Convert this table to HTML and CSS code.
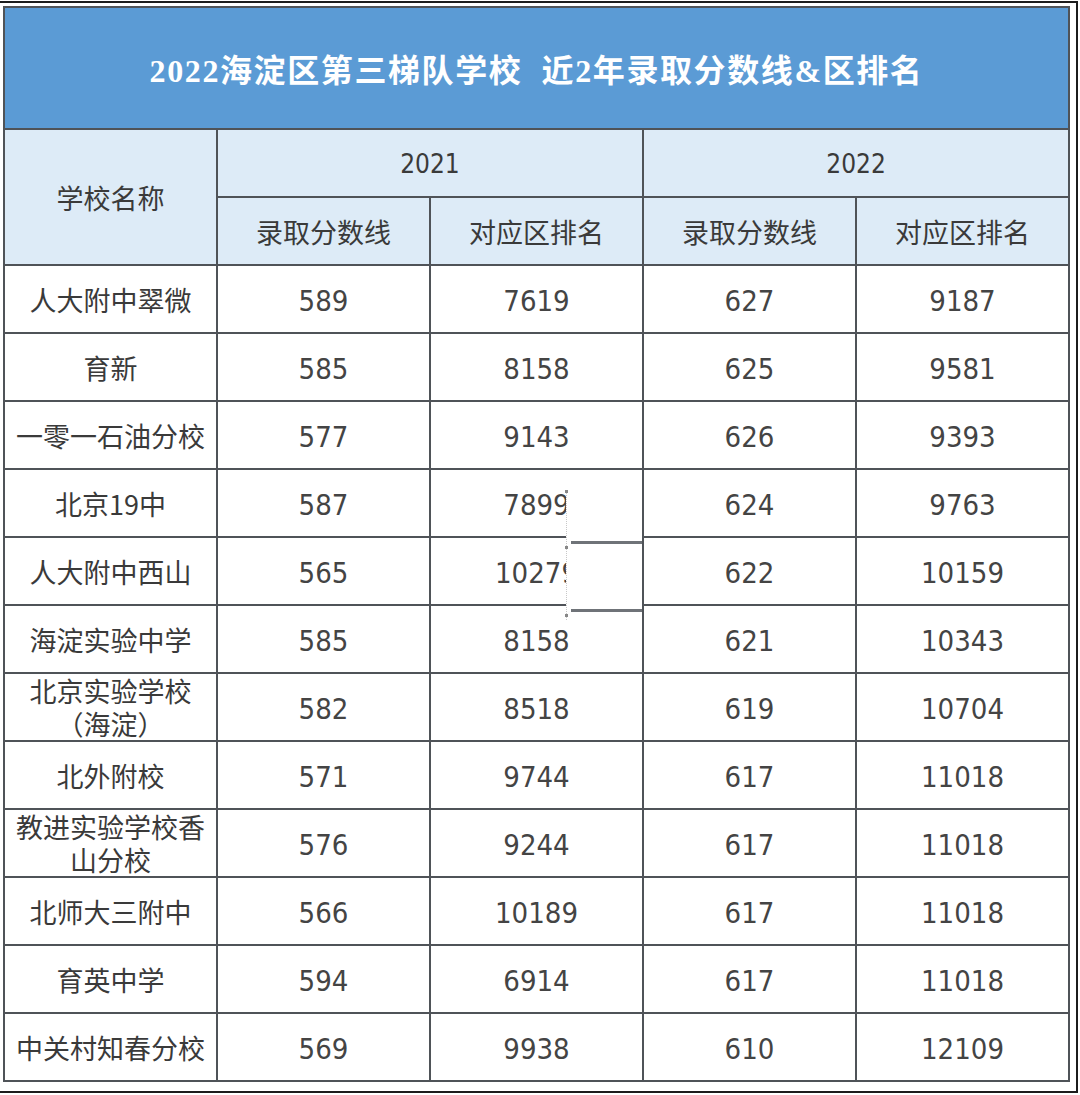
FILE: index.html
```html
<!DOCTYPE html>
<html lang="zh-CN">
<head>
<meta charset="utf-8">
<title>2022海淀区第三梯队学校 近2年录取分数线&amp;区排名</title>
<link rel="stylesheet" href="styles.css">
</head>
<body>
<div class="frame">
  <div class="sheet">
    <table class="score-table">
      <colgroup>
        <col class="c"><col class="c"><col class="c"><col class="c"><col class="c">
      </colgroup>
      <thead>
        <tr class="title-row">
          <th colspan="5" class="title">2022海淀区第三梯队学校&nbsp;&nbsp;近2年录取分数线&amp;区排名</th>
        </tr>
        <tr class="year-row">
          <th rowspan="2" class="head cjk">学校名称</th>
          <th colspan="2" class="head year">2021</th>
          <th colspan="2" class="head year">2022</th>
        </tr>
        <tr class="sub-row">
          <th class="head cjk">录取分数线</th>
          <th class="head cjk">对应区排名</th>
          <th class="head cjk">录取分数线</th>
          <th class="head cjk">对应区排名</th>
        </tr>
      </thead>
      <tbody>
        <tr><td class="name">人大附中翠微</td><td>589</td><td>7619</td><td>627</td><td>9187</td></tr>
        <tr><td class="name">育新</td><td>585</td><td>8158</td><td>625</td><td>9581</td></tr>
        <tr><td class="name">一零一石油分校</td><td>577</td><td>9143</td><td>626</td><td>9393</td></tr>
        <tr><td class="name">北京19中</td><td>587</td><td>7899</td><td>624</td><td>9763</td></tr>
        <tr><td class="name">人大附中西山</td><td>565</td><td>10279</td><td>622</td><td>10159</td></tr>
        <tr><td class="name">海淀实验中学</td><td>585</td><td>8158</td><td>621</td><td>10343</td></tr>
        <tr><td class="name">北京实验学校（海淀）</td><td>582</td><td>8518</td><td>619</td><td>10704</td></tr>
        <tr><td class="name">北外附校</td><td>571</td><td>9744</td><td>617</td><td>11018</td></tr>
        <tr><td class="name">教进实验学校香山分校</td><td>576</td><td>9244</td><td>617</td><td>11018</td></tr>
        <tr><td class="name">北师大三附中</td><td>566</td><td>10189</td><td>617</td><td>11018</td></tr>
        <tr><td class="name">育英中学</td><td>594</td><td>6914</td><td>617</td><td>11018</td></tr>
        <tr><td class="name">中关村知春分校</td><td>569</td><td>9938</td><td>610</td><td>12109</td></tr>
      </tbody>
    </table>
    <div class="patch"><span class="tick t1"></span><span class="tick t2"></span><span class="tick t3"></span></div>
  </div>
</div>
</body>
</html>
```
FILE: styles.css
```css
html, body {
  margin: 0;
  padding: 0;
  background: #ffffff;
}

.frame {
  margin-top: 1px;
  width: 1076px;
  height: 1088px;
  border-top: 2px solid #1c1c1c;
  border-right: 2px solid #1c1c1c;
  border-bottom: 2px solid #1c1c1c;
}

.sheet {
  position: relative;
  padding: 3px 0 0 3px;
}

.score-table {
  border-collapse: collapse;
  table-layout: fixed;
  width: 1066px;
  border: 2px solid #555a60;
}

.score-table .c {
  width: 213px;
}

.score-table th,
.score-table td {
  border: 2px solid #4f5358;
  padding: 0 4px;
  text-align: center;
  vertical-align: middle;
}

.title-row th {
  height: 120px;
  background: #5b9bd5;
  color: #ffffff;
  font-family: "Liberation Serif", "Noto Sans CJK SC", serif;
  font-weight: bold;
  font-size: 32px;
  letter-spacing: 1.6px;
}

.year-row th {
  height: 64px;
}

.sub-row th {
  height: 66px;
}

.head {
  background: #ddebf7;
  color: #3a3a3a;
  font-weight: normal;
}

.head.cjk {
  font-family: "Noto Sans CJK SC", sans-serif;
  font-size: 27px;
}

.head.year {
  font-family: "Liberation Sans Narrow", "DejaVu Sans", "Noto Sans CJK SC", sans-serif;
  font-stretch: condensed;
  font-size: 26px;
  padding-top: 2px;
}

.score-table td {
  height: 62px;
  background: #ffffff;
  color: #444444;
  font-family: "Liberation Sans Narrow", "DejaVu Sans", "Noto Sans CJK SC", sans-serif;
  font-stretch: condensed;
  font-size: 29px;
  line-height: 34px;
  padding-top: 4px;
}

.score-table td.name {
  color: #3a3a3a;
  font-family: "Noto Sans CJK SC", sans-serif;
  font-size: 27px;
  line-height: 33px;
  padding: 0 6px;
}

.patch {
  position: absolute;
  left: 566px;
  top: 487px;
  width: 75px;
  height: 130px;
  background: #ffffff;
  border-left: 1px dotted #c8c8c8;
}

.tick {
  position: absolute;
  left: -2px;
  width: 3px;
  height: 3px;
  background: #888;
}

.t1 { top: 0; }
.t2 { top: 56px; }
.t3 { top: 124px; }

.patch::before,
.patch::after {
  content: "";
  position: absolute;
  left: 4px;
  right: 0;
  height: 3px;
  background: #6f7378;
}

.patch::before { top: 51px; }
.patch::after { top: 119px; }
```
